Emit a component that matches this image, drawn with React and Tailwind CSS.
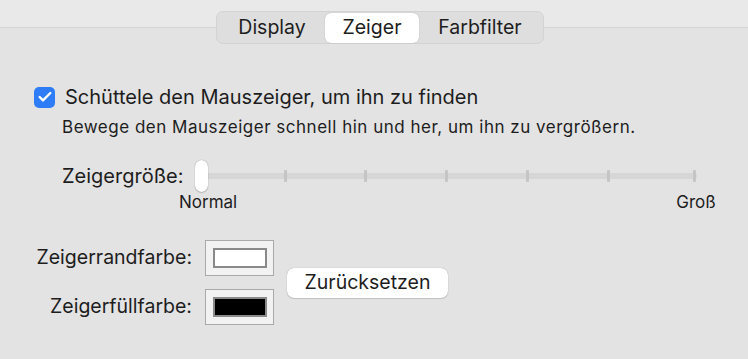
import { Check } from "lucide-react";

const TABS = ["Display", "Zeiger", "Farbfilter"];
// tick x offsets inside the slider box (box starts at x=195)
const TICKS = [89, 169, 250, 331, 412, 498];

function Tabs() {
  return (
    <div className="relative z-10 flex h-[33px] w-[328px] items-center rounded-[7px] border border-[#d3d3d3] bg-[#dedede] px-[2px]">
      {TABS.map((t) => (
        <div
          key={t}
          className={
            t === "Zeiger"
              ? "flex h-[30px] w-[94px] items-center justify-center rounded-[6px] bg-white text-[19.5px] text-[#1d1d1d] shadow-[0_0_1px_rgba(0,0,0,0.3)]"
              : t === "Display"
              ? "flex h-[30px] w-[106px] items-center justify-center text-[19.5px] text-[#1d1d1d]"
              : "flex h-[30px] flex-1 items-center justify-center text-[19.5px] text-[#1d1d1d]"
          }
        >
          {t}
        </div>
      ))}
    </div>
  );
}

function ColorWell({ color }) {
  return (
    <div className="flex h-[36px] w-[69px] items-center justify-center border border-[#a9a9a9] bg-[#f2f2f2]">
      <div className={`h-[20px] w-[54px] border-2 border-[#8a8a8a] ${color}`} />
    </div>
  );
}

export default function App() {
  return (
    <div
      className="h-[359px] w-[748px] overflow-hidden bg-[#e3e3e3] text-[#1d1d1d]"
      style={{ fontFamily: "Inter, 'Liberation Sans', sans-serif" }}
    >
      {/* Header */}
      <div className="h-[28px] border-b border-[#d5d5d5] bg-[#e9e9e9] pl-[216px] pt-[11px]">
        <Tabs />
      </div>

      {/* Checkbox */}
      <div className="mt-[58px] flex h-[22px] items-center gap-[10px] pl-[34px]">
        <div className="flex h-[21px] w-[21px] items-center justify-center rounded-[5px] bg-[#2f7df6]">
          <Check size={16} strokeWidth={3.5} color="white" />
        </div>
        <span className="text-[20px] leading-[22px]">Schüttele den Mauszeiger, um ihn zu finden</span>
      </div>
      <div className="mt-[9px] pl-[62px] text-[17px] leading-[20px] tracking-[0.03em]">
        Bewege den Mauszeiger schnell hin und her, um ihn zu vergrößern.
      </div>

      {/* Slider */}
      <div className="mt-[23px] flex h-[32px] items-center pl-[62px]">
        <span className="w-[133px] text-[20px]">Zeigergröße:</span>
        <div className="relative h-[32px] w-[505px]">
          <div className="absolute left-[6px] top-[13px] h-[6px] w-[496px] rounded-full bg-[#d6d6d6]" />
          {TICKS.map((x) => (
            <div
              key={x}
              className="absolute top-[10px] h-[12px] w-[3px] rounded-[1px] bg-[#c5c5c5]"
              style={{ left: x }}
            />
          ))}
          <div className="absolute left-0 top-0 h-[32px] w-[13px] rounded-full bg-white shadow-[0_0_1px_rgba(0,0,0,0.45),0_1px_1px_rgba(0,0,0,0.15)]" />
        </div>
      </div>
      <div className="mt-[1px] flex h-[20px] items-center pl-[179px] text-[17px]">
        <span>Normal</span>
        <span className="ml-[439px]">Groß</span>
      </div>

      {/* Colors */}
      <div className="mt-[27px] flex items-center">
        <div className="flex flex-col gap-[13px]">
          <div className="flex items-center">
            <span className="w-[192px] text-right text-[19.5px]">Zeigerrandfarbe:</span>
            <div className="ml-[13px]">
              <ColorWell color="bg-white" />
            </div>
          </div>
          <div className="flex items-center">
            <span className="w-[192px] text-right text-[19.5px]">Zeigerfüllfarbe:</span>
            <div className="ml-[13px]">
              <ColorWell color="bg-black" />
            </div>
          </div>
        </div>
        <button className="ml-[13px] h-[30px] w-[161px] rounded-[7px] bg-white text-[19.5px] shadow-[0_0_1px_rgba(0,0,0,0.35),0_1px_1px_rgba(0,0,0,0.12)]">
          Zurücksetzen
        </button>
      </div>
    </div>
  );
}
